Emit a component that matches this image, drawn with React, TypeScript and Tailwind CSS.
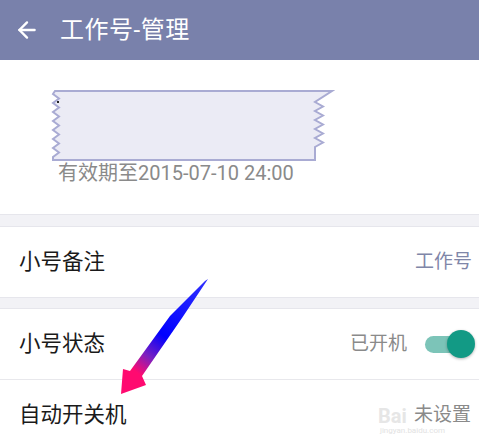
import { ArrowLeft } from "lucide-react";

const cjk = { fontFamily: 'Roboto, "Noto Sans CJK SC", "Noto Sans", sans-serif' };

function zig(x0: number, y0: number, y1: number, amp: number, step: number) {
  const pts: string[] = [];
  let i = 0;
  for (let y = y0; y <= y1; y += step / 2, i++) {
    pts.push(`${i % 2 === 0 ? x0 : x0 + amp},${y}`);
  }
  return pts;
}

function Tape() {
  const left = zig(2, 4, 68, 6, 9).reverse();
  const right = zig(264, 12, 60, 8, 9);
  const points = ["4,1", "281,1", ...right, "264,70", "2,70", ...left].join(" ");
  return (
    <svg width="284" height="72" viewBox="0 0 284 72">
      <polygon points={points} fill="#ebebf5" stroke="#a9abd3" strokeWidth="2" strokeLinejoin="miter" />
      <rect x="6" y="11" width="2" height="2" fill="#222" />
    </svg>
  );
}

function Arrow() {
  return (
    <svg className="absolute left-0 top-0 pointer-events-none" width="479" height="437" viewBox="0 0 479 437">
      <defs>
        <linearGradient id="ag" x1="207" y1="280" x2="122" y2="393" gradientUnits="userSpaceOnUse">
          <stop offset="0" stopColor="#3030ff" />
          <stop offset="0.5" stopColor="#0000ff" />
          <stop offset="0.68" stopColor="#7a20c0" />
          <stop offset="0.82" stopColor="#ff0a70" />
          <stop offset="1" stopColor="#ff0a70" />
        </linearGradient>
      </defs>
      <polygon
        points="208,279 182,318 142,376 146,385 121,394 123,369 130,371 170,316 205,281"
        fill="url(#ag)"
      />
    </svg>
  );
}

export default function App() {
  return (
    <div className="relative w-[479px] h-[437px] overflow-hidden bg-white" style={cjk}>
      <div className="h-[60px] bg-[#7981ab] flex items-center">
        <ArrowLeft className="ml-[14px] text-white" size={26} strokeWidth={2.2} />
        <span className="ml-[20px] text-[24px] text-white tracking-[0.5px]">工作号-管理</span>
      </div>

      <div className="h-[154px] pt-[30px] pl-[51px]">
        <Tape />
        <div className="ml-[7px] -mt-[1px] text-[20px] leading-[24px] text-[#8a8a8a]">有效期至2015-07-10 24:00</div>
      </div>

      <div className="h-[13px] bg-[#f2f2f6] border-y border-[#e6e6ec]" />

      <div className="h-[70px] flex items-center justify-between px-[19px] pr-[7px]">
        <span className="text-[21.5px] text-[#1a1a1a]">小号备注</span>
        <span className="text-[19px] text-[#7f86a8]">工作号</span>
      </div>

      <div className="h-[12px] bg-[#f2f2f6] border-y border-[#e6e6ec]" />

      <div className="h-[71px] flex items-center justify-between pl-[19px] pr-[4px] border-b border-[#e8e8ec]">
        <span className="text-[21.5px] text-[#1a1a1a]">小号状态</span>
        <div className="flex items-center">
          <span className="text-[19px] text-[#8a8a8a]">已开机</span>
          <div className="relative ml-[18px] w-[50px] h-[28px] flex items-center">
            <div className="w-[46px] h-[17px] rounded-full bg-[#7cc4b8]" />
            <div className="absolute right-0 top-0 w-[28px] h-[28px] rounded-full bg-[#129a85] shadow-[0_1px_3px_rgba(0,0,0,0.3)]" />
          </div>
        </div>
      </div>

      <div className="relative h-[70px] flex items-center justify-between pl-[19px] pr-[8px]">
        <span className="text-[21.5px] text-[#1a1a1a]">自动开关机</span>
        <span className="text-[19px] text-[#8a8a8a]">未设置</span>
        <span className="absolute left-[378px] top-[26px] text-[20px] leading-[20px] font-bold text-[#e6e6e6] pointer-events-none">Bai</span>
        <span className="absolute left-[380px] top-[46px] text-[8px] leading-[9px] text-[#e2e2e2] pointer-events-none">jingyan.baidu.com</span>
      </div>

      <Arrow />
    </div>
  );
}
